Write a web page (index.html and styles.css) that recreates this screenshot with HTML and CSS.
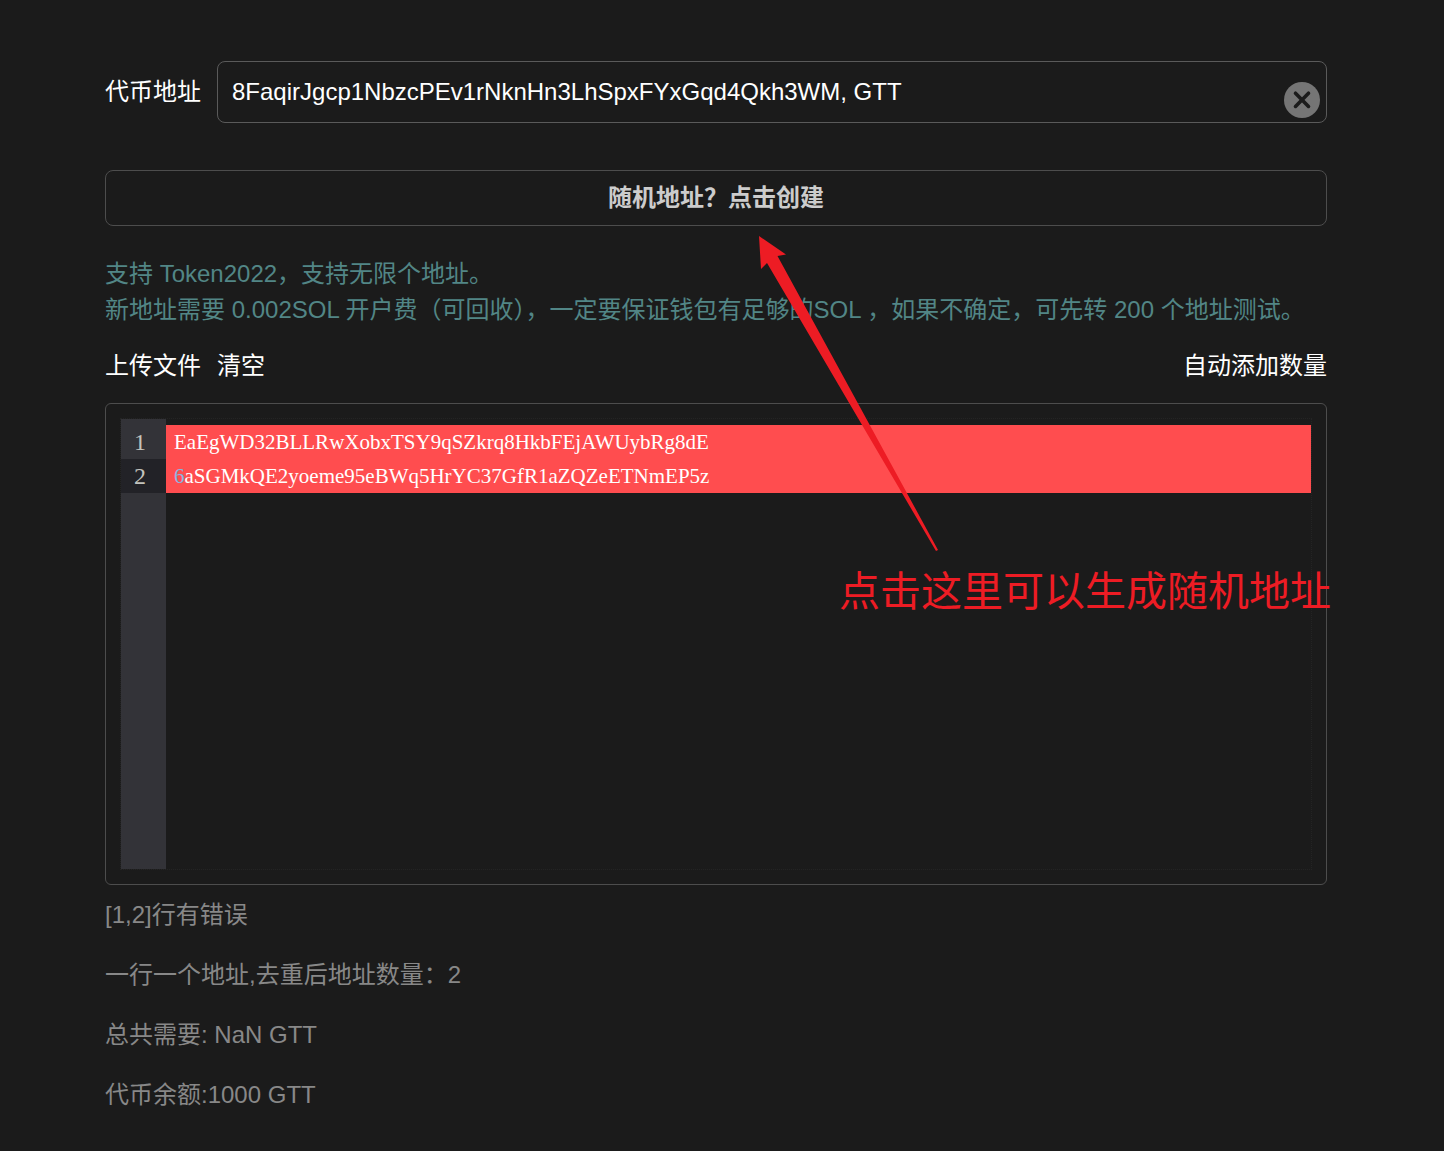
FILE: index.html
```html
<!DOCTYPE html>
<html lang="zh-CN">
<head>
<meta charset="utf-8">
<meta name="viewport" content="width=device-width, initial-scale=1">
<title>批量转账</title>
<link rel="stylesheet" href="styles.css">
</head>
<body>
<main class="page">
  <div class="token">
    <label class="token-label" for="token">代币地址</label>
    <div class="token-field">
      <input class="token-input" id="token" type="text" value="8FaqirJgcp1NbzcPEv1rNknHn3LhSpxFYxGqd4Qkh3WM, GTT">
      <button class="token-clear" type="button" aria-label="清除">
        <svg viewBox="0 0 36 36" width="36" height="36" aria-hidden="true">
          <circle cx="18" cy="18" r="18" fill="#757575"/>
          <path d="M11.500 11.200 24.500 24.400M24.500 11.200 11.500 24.400" fill="none" stroke="#1b1b1b" stroke-width="3.600" stroke-linecap="round"/>
        </svg>
      </button>
    </div>
  </div>

  <button class="create" type="button">随机地址？点击创建</button>

  <p class="hint">支持 Token2022，支持无限个地址。<br>新地址需要 0.002SOL 开户费（可回收），一定要保证钱包有足够的SOL ，如果不确定，可先转 200 个地址测试。</p>

  <div class="toolbar">
    <button class="action" type="button">上传文件</button>
    <button class="action" type="button">清空</button>
    <button class="action action-end" type="button">自动添加数量</button>
  </div>

  <div class="editor">
    <div class="editor-frame">
      <div class="gutter" aria-hidden="true">
        <div class="gutter-line gutter-first">1</div>
        <div class="gutter-line gutter-active">2</div>
      </div>
      <div class="code" role="textbox" aria-multiline="true" aria-label="地址列表" contenteditable="true" spellcheck="false">
        <div class="code-line">EaEgWD32BLLRwXobxTSY9qSZkrq8HkbFEjAWUybRg8dE</div>
        <div class="code-line"><span class="number">6</span>aSGMkQE2yoeme95eBWq5HrYC37GfR1aZQZeETNmEP5z</div>
      </div>
    </div>
    <svg class="arrow" viewBox="0 0 180 316" width="180" height="316" aria-hidden="true">
      <path d="M1 0 28 18.500 19.500 20 180 314 178 315 9 27 3 33Z" fill="#ed1c24"/>
    </svg>
    <div class="note">点击这里可以生成随机地址</div>
  </div>

  <div class="summary">
    <p class="summary-line">[1,2]行有错误</p>
    <p class="summary-line">一行一个地址,去重后地址数量：2</p>
    <p class="summary-line">总共需要: NaN GTT</p>
    <p class="summary-line">代币余额:1000 GTT</p>
  </div>
</main>
</body>
</html>
```
FILE: styles.css
```css
* {
  box-sizing: border-box;
}

body {
  margin: 0;
  background: #1b1b1b;
  color: #fff;
  font: 24px/36px "Liberation Sans", "Noto Sans CJK SC", sans-serif;
}

button,
input {
  margin: 0;
  font: inherit;
  color: inherit;
}

button {
  padding: 0;
  border: 0;
  background: none;
  cursor: pointer;
}

p {
  margin: 0;
}

.page {
  padding: 61px 117px 36px 105px;
}

.token {
  display: flex;
  align-items: center;
  gap: 16px;
}

.token-label {
  flex: none;
}

.token-field {
  position: relative;
  flex: 1;
  display: flex;
}

.token-input {
  width: 100%;
  height: 62px;
  padding: 0 60px 0 14px;
  border: 1px solid #5a5a5a;
  border-radius: 8px;
  background: transparent;
}

.token-clear {
  position: absolute;
  right: 7px;
  bottom: 5px;
  width: 36px;
  height: 36px;
}

.token-clear svg {
  display: block;
}

.create {
  display: block;
  width: 100%;
  height: 56px;
  margin-top: 47px;
  border: 1px solid #4d4d4d;
  border-radius: 8px;
  color: #ccc;
  font-weight: 700;
}

.hint {
  margin-top: 30px;
  color: #528686;
}

.toolbar {
  display: flex;
  gap: 16px;
  margin-top: 20px;
}

.action-end {
  margin-left: auto;
}

.editor {
  position: relative;
  margin-top: 19px;
  padding: 14px;
  border: 1px solid #4d4d4d;
  border-radius: 6px;
}

.editor-frame {
  display: flex;
  min-height: 452px;
  border: 1px dotted #242424;
}

.gutter {
  flex: none;
  width: 45px;
  background: #333338;
  color: #c3c3bd;
  font-family: "Liberation Serif", "Noto Sans CJK SC", serif;
  line-height: 34px;
}

.gutter-line {
  padding-right: 20px;
  text-align: right;
}

.gutter-first {
  padding-top: 6px;
}

.gutter-active {
  background: #222227;
}

.code {
  flex: 1;
  min-width: 0;
  padding: 6px 0;
  outline: 0;
  font-family: "Liberation Serif", "Noto Sans CJK SC", serif;
  font-size: 21px;
  line-height: 34px;
}

.code-line {
  padding: 0 8px;
  background: #ff4d4f;
}

.number {
  color: #8ab4e0;
}

.arrow {
  position: absolute;
  left: 652px;
  top: -168px;
  pointer-events: none;
}

.note {
  position: absolute;
  left: 733px;
  top: 160px;
  color: #ed1c24;
  font-size: 41px;
  line-height: 56px;
  white-space: nowrap;
  pointer-events: none;
}

.summary {
  display: grid;
  gap: 24px;
  margin-top: 12px;
  color: #888;
}
```
